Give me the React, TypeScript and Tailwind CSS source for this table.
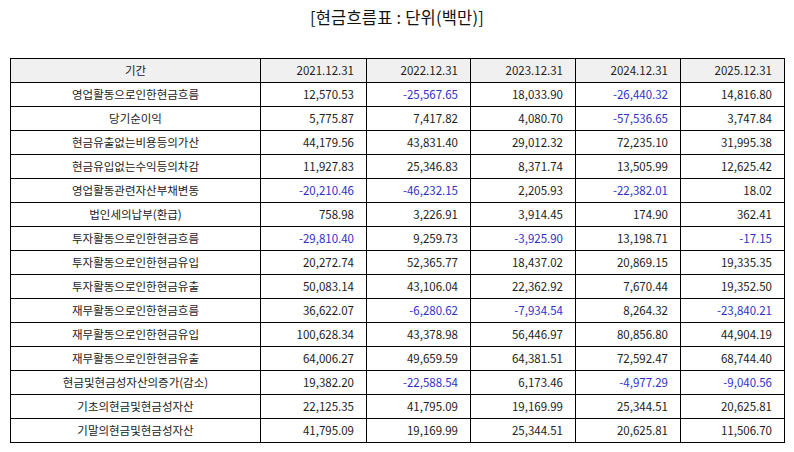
import React from "react";

const rows: [string, string[]][] = [
  ["영업활동으로인한현금흐름", ["12,570.53", "-25,567.65", "18,033.90", "-26,440.32", "14,816.80"]],
  ["당기순이익", ["5,775.87", "7,417.82", "4,080.70", "-57,536.65", "3,747.84"]],
  ["현금유출없는비용등의가산", ["44,179.56", "43,831.40", "29,012.32", "72,235.10", "31,995.38"]],
  ["현금유입없는수익등의차감", ["11,927.83", "25,346.83", "8,371.74", "13,505.99", "12,625.42"]],
  ["영업활동관련자산부채변동", ["-20,210.46", "-46,232.15", "2,205.93", "-22,382.01", "18.02"]],
  ["법인세의납부(환급)", ["758.98", "3,226.91", "3,914.45", "174.90", "362.41"]],
  ["투자활동으로인한현금흐름", ["-29,810.40", "9,259.73", "-3,925.90", "13,198.71", "-17.15"]],
  ["투자활동으로인한현금유입", ["20,272.74", "52,365.77", "18,437.02", "20,869.15", "19,335.35"]],
  ["투자활동으로인한현금유출", ["50,083.14", "43,106.04", "22,362.92", "7,670.44", "19,352.50"]],
  ["재무활동으로인한현금흐름", ["36,622.07", "-6,280.62", "-7,934.54", "8,264.32", "-23,840.21"]],
  ["재무활동으로인한현금유입", ["100,628.34", "43,378.98", "56,446.97", "80,856.80", "44,904.19"]],
  ["재무활동으로인한현금유출", ["64,006.27", "49,659.59", "64,381.51", "72,592.47", "68,744.40"]],
  ["현금및현금성자산의증가(감소)", ["19,382.20", "-22,588.54", "6,173.46", "-4,977.29", "-9,040.56"]],
  ["기초의현금및현금성자산", ["22,125.35", "41,795.09", "19,169.99", "25,344.51", "20,625.81"]],
  ["기말의현금및현금성자산", ["41,795.09", "19,169.99", "25,344.51", "20,625.81", "11,506.70"]],
];

const years = ["2021.12.31", "2022.12.31", "2023.12.31", "2024.12.31", "2025.12.31"];

export default function App() {
  return (
    <div
      className="w-[794px] h-[452px] bg-white text-[#222]"
      style={{ fontFamily: '"Noto Sans CJK KR", "Noto Sans", sans-serif' }}
    >
      <div className="h-[58px] pt-[5px] text-center text-[16.5px] leading-[24px] text-[#111] tracking-[0.2px]">
        [현금흐름표 : 단위(백만)]
      </div>
      <table className="ml-[10px] w-[774px] border-collapse table-fixed text-[11.5px]">
        <colgroup>
          <col className="w-[250px]" />
          <col className="w-[106px]" />
          <col className="w-[104px]" />
          <col className="w-[105px]" />
          <col className="w-[105px]" />
          <col className="w-[104px]" />
        </colgroup>
        <thead>
          <tr className="h-[24px] bg-[#f0f0f0]">
            <th className="border border-black font-normal text-center p-0">기간</th>
            {years.map((y) => (
              <th key={y} className="border border-black font-normal text-right pr-[12px] p-0">
                {y}
              </th>
            ))}
          </tr>
        </thead>
        <tbody>
          {rows.map(([label, vals]) => (
            <tr key={label} className="h-[24px]">
              <td className="border border-black text-center p-0">{label}</td>
              {vals.map((v, i) => (
                <td
                  key={i}
                  className={
                    v.startsWith("-")
                      ? "border border-black text-right pr-[12px] p-0 text-[#3030c8]"
                      : "border border-black text-right pr-[12px] p-0"
                  }
                >
                  {v}
                </td>
              ))}
            </tr>
          ))}
        </tbody>
      </table>
    </div>
  );
}
